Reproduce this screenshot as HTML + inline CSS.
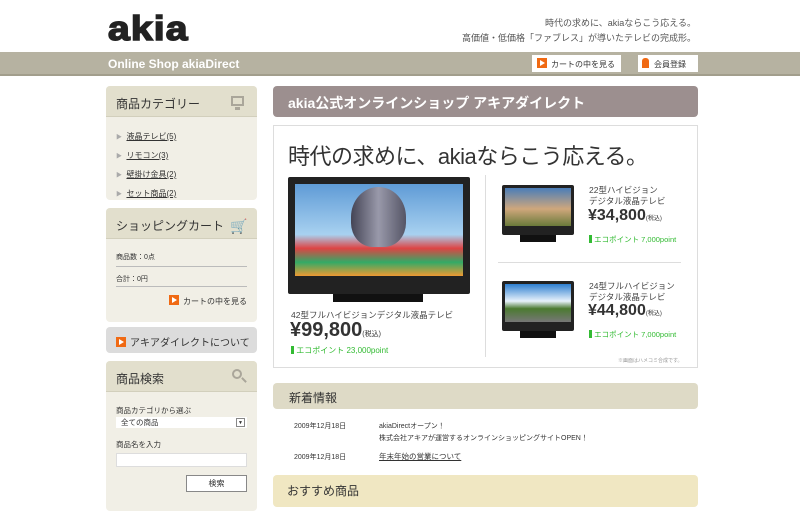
<!DOCTYPE html>
<html><head><meta charset="utf-8"><style>
*{margin:0;padding:0;box-sizing:border-box}
body{width:800px;height:504px;overflow:hidden;background:#fff;font-family:"Liberation Sans","Noto Sans CJK JP",sans-serif;color:#333;position:relative}
.a{position:absolute}
.box{position:absolute;left:106px;width:151px;background:#f1efe6;border-radius:4px;overflow:hidden}
.bh{height:31px;background:#e2dfcd;border-bottom:1px solid #d2cfbc;font-size:12px;padding:9px 0 0 10px;color:#333}
.ic{display:inline-block;width:10px;height:10px;background:#f06a14;position:relative;vertical-align:-1px;margin-right:4px}
.ic:after{content:"";position:absolute;left:3px;top:2px;border-left:5px solid #fff;border-top:3px solid transparent;border-bottom:3px solid transparent}
.lnk{font-size:8px;text-decoration:underline;color:#333}
.tv{position:absolute;background:#222;border-radius:2px}
.sc{position:absolute}
</style></head><body>
<div class="a" style="left:108px;top:12px;font:bold 34px/34px 'Liberation Sans',sans-serif;letter-spacing:1px;color:#222;-webkit-text-stroke:1.5px #222;transform:scaleX(1.15);transform-origin:left">akia</div>
<div class="a" style="right:104px;top:16px;font-size:9px;color:#555;text-align:right;line-height:15px">時代の求めに、akiaならこう応える。<br>高価値・低価格「ファブレス」が導いたテレビの完成形。</div>
<div class="a" style="left:0;top:52px;width:800px;height:24px;background:#b6b2a1;border-bottom:2px solid #a29e8c"></div>
<div class="a" style="left:108px;top:57px;font:bold 12px 'Liberation Sans',sans-serif;color:#fff">Online Shop akiaDirect</div>
<div class="a" style="left:532px;top:55px;width:89px;height:17px;background:#fff;font-size:8px;padding:3px 0 0 5px"><span class="ic"></span>カートの中を見る</div>
<div class="a" style="left:638px;top:55px;width:60px;height:17px;background:#fff;font-size:8px;padding:3px 0 0 4px"><span style="display:inline-block;width:7px;height:10px;background:#f06a14;border-radius:3px 3px 0 0;vertical-align:-1px;margin-right:5px"></span>会員登録</div>

<div class="box" style="top:86px;height:114px"><div class="bh">商品カテゴリー<span class="a" style="left:125px;top:10px;width:13px;height:10px;border:2px solid #aaa69a"></span><span class="a" style="left:129px;top:21px;width:5px;height:3px;background:#aaa69a"></span></div>
<div style="padding:10px 0 0 10px;line-height:16px"><div><span style="font-size:6px;color:#aaa">▶</span> <span class="lnk">液晶テレビ(5)</span></div><div><span style="font-size:6px;color:#aaa">▶</span> <span class="lnk">リモコン(3)</span></div><div><span style="font-size:6px;color:#aaa">▶</span> <span class="lnk">壁掛け金具(2)</span></div><div><span style="font-size:6px;color:#aaa">▶</span> <span class="lnk">セット商品(2)</span></div></div></div>

<div class="box" style="top:208px;height:114px"><div class="bh">ショッピングカート<span class="a" style="left:124px;top:10px;font-size:14px;color:#aaa69a">🛒</span></div>
<div style="margin:8px 10px 0;font-size:7px;height:20px;border-bottom:1px solid #bbb;padding-top:5px">商品数：0点</div>
<div style="margin:0 10px;font-size:7px;height:20px;border-bottom:1px solid #bbb;padding-top:7px">合計：0円</div>
<div style="text-align:right;margin:8px 10px 0;font-size:8px"><span class="ic"></span>カートの中を見る</div></div>

<div class="box" style="top:327px;height:26px;background:#dcdcdc;font-size:10px;padding:7px 0 0 10px"><span class="ic"></span>アキアダイレクトについて</div>

<div class="box" style="top:361px;height:150px"><div class="bh">商品検索<span class="a" style="left:126px;top:8px;width:10px;height:10px;border:2px solid #aaa69a;border-radius:50%"></span><span class="a" style="left:135px;top:18px;width:6px;height:2px;background:#aaa69a;transform:rotate(45deg)"></span></div>
<div style="margin:13px 10px 0;font-size:7.5px">商品カテゴリから選ぶ</div>
<div style="margin:1px 10px 0;height:11px;background:#fff;font-size:7.5px;padding-left:5px;position:relative">全ての商品<span class="a" style="right:2px;top:1px;width:9px;height:9px;border:1px solid #888;font-size:5px;text-align:center;line-height:8px">▼</span></div>
<div style="margin:11px 10px 0;font-size:7.5px">商品名を入力</div>
<div style="margin:3px 10px 0;height:14px;background:#fff;border:1px solid #ddd"></div>
<div style="margin:8px 10px 0 auto;width:61px;height:17px;background:#fff;border:1px solid #888;font-size:8px;text-align:center;line-height:15px">検索</div></div>

<div class="a" style="left:273px;top:86px;width:425px;height:31px;background:#9c8f8f;border-radius:4px;color:#fff;font-size:14px;font-weight:bold;padding:7px 0 0 15px">akia公式オンラインショップ アキアダイレクト</div>
<div class="a" style="left:273px;top:125px;width:425px;height:243px;border:1px solid #ddd"></div>
<div class="a" style="left:288px;top:139px;font-size:22px;color:#333;letter-spacing:-0.5px">時代の求めに、akiaならこう応える。</div>
<div class="tv" style="left:288px;top:177px;width:182px;height:117px"><div class="sc" style="left:7px;top:7px;width:168px;height:92px;background:linear-gradient(#5f9bd6,#a8d1f0 55%,#d44 70%,#3a6 85%,#e93)"></div><div class="sc" style="left:63px;top:10px;width:55px;height:60px;border-radius:50% 50% 40% 40%;background:linear-gradient(90deg,#445,#99a,#556)"></div></div>
<div class="a" style="left:333px;top:294px;width:90px;height:8px;background:#111"></div>
<div class="a" style="left:291px;top:309px;font-size:8.5px;color:#444">42型フルハイビジョンデジタル液晶テレビ</div>
<div class="a" style="left:290px;top:319px;font-size:20px;font-weight:bold;color:#333">¥99,800<span style="font-size:7px;font-weight:normal">(税込)</span></div>
<div class="a" style="left:291px;top:345px;font-size:8px;color:#3b3"><span style="display:inline-block;width:3px;height:8px;background:#3b3;vertical-align:-1px"></span> エコポイント 23,000point</div>
<div class="a" style="left:485px;top:175px;width:1px;height:182px;background:#ddd"></div>
<div class="a" style="left:498px;top:262px;width:183px;height:1px;background:#ddd"></div>
<div class="tv" style="left:502px;top:185px;width:72px;height:50px"><div class="sc" style="left:3px;top:3px;width:66px;height:38px;background:linear-gradient(#4a7db8,#cfa77c 55%,#6a7a3a)"></div></div>
<div class="a" style="left:520px;top:235px;width:36px;height:7px;background:#111"></div>
<div class="tv" style="left:502px;top:281px;width:72px;height:50px"><div class="sc" style="left:3px;top:3px;width:66px;height:38px;background:linear-gradient(#2e7fd0,#e8f2fb 45%,#4b7a30 65%,#777)"></div></div>
<div class="a" style="left:520px;top:331px;width:36px;height:7px;background:#111"></div>
<div class="a" style="left:589px;top:185px;font-size:8.5px;color:#444;line-height:11px">22型ハイビジョン<br>デジタル液晶テレビ</div>
<div class="a" style="left:588px;top:207px;font-size:16px;font-weight:bold">¥34,800<span style="font-size:6px;font-weight:normal">(税込)</span></div>
<div class="a" style="left:589px;top:234px;font-size:7.5px;color:#3b3"><span style="display:inline-block;width:3px;height:8px;background:#3b3;vertical-align:-1px"></span> エコポイント 7,000point</div>
<div class="a" style="left:589px;top:281px;font-size:8.5px;color:#444;line-height:11px">24型フルハイビジョン<br>デジタル液晶テレビ</div>
<div class="a" style="left:588px;top:302px;font-size:16px;font-weight:bold">¥44,800<span style="font-size:6px;font-weight:normal">(税込)</span></div>
<div class="a" style="left:589px;top:329px;font-size:7.5px;color:#3b3"><span style="display:inline-block;width:3px;height:8px;background:#3b3;vertical-align:-1px"></span> エコポイント 7,000point</div>
<div class="a" style="left:618px;top:357px;font-size:5px;color:#999">※画面はハメコミ合成です。</div>

<div class="a" style="left:273px;top:383px;width:425px;height:26px;background:#dedac6;border-radius:4px;font-size:12px;padding:6px 0 0 16px">新着情報</div>
<div class="a" style="left:294px;top:421px;font-size:7px">2009年12月18日</div>
<div class="a" style="left:379px;top:421px;font-size:7px;line-height:12px">akiaDirectオープン！<br>株式会社アキアが運営するオンラインショッピングサイトOPEN！</div>
<div class="a" style="left:294px;top:452px;font-size:7px">2009年12月18日</div>
<div class="a" style="left:379px;top:451px;font-size:7.5px;text-decoration:underline">年末年始の営業について</div>
<div class="a" style="left:273px;top:475px;width:425px;height:32px;background:#f0e7c2;border-radius:4px;font-size:12px;padding:7px 0 0 14px">おすすめ商品</div>
</body></html>
